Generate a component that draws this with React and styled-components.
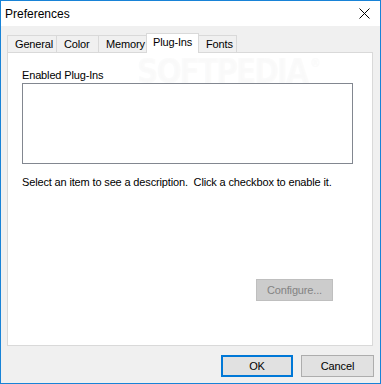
import React from "react";
import styled, { createGlobalStyle } from "styled-components";

const GlobalStyle = createGlobalStyle`
  html, body {
    margin: 0;
    padding: 0;
    background: #ffffff;
  }
  body {
    font-family: "Liberation Sans", Arial, sans-serif;
    font-size: 11px;
    letter-spacing: -0.15px;
    color: #000000;
  }
`;

const tabs = [
  { label: "General", width: 50 },
  { label: "Color", width: 43 },
  { label: "Memory", width: 49 },
  { label: "Plug-Ins", width: 53, active: true },
  { label: "Fonts", width: 39 },
];

const Window = styled.div`
  width: 381px;
  height: 384px;
  box-sizing: border-box;
  border: 1px solid #1883d7;
  background: #f0f0f0;
  display: flex;
  flex-direction: column;
  position: relative;
  overflow: hidden;
`;

const TitleBar = styled.div`
  height: 25px;
  background: #ffffff;
  display: flex;
  align-items: center;
  justify-content: space-between;
  padding: 0 0 0 4px;
  font-size: 12px;
  letter-spacing: 0;
`;

const CloseBox = styled.div`
  width: 46px;
  height: 25px;
  display: flex;
  align-items: center;
  justify-content: center;
  margin-right: -7px;
`;

const Body = styled.div`
  flex: 1;
  display: flex;
  flex-direction: column;
  padding: 7px 7px 0 6px;
`;

const TabRow = styled.div`
  display: flex;
  align-items: flex-end;
  height: 19px;
`;

const Tab = styled.div`
  box-sizing: border-box;
  width: ${(p) => p.$width}px;
  height: ${(p) => (p.$active ? 20 : 17)}px;
  border: 1px solid #d9d9d9;
  border-bottom: none;
  background: ${(p) => (p.$active ? "#ffffff" : "#f0f0f0")};
  margin-right: -1px;
  margin-bottom: ${(p) => (p.$active ? -1 : 0)}px;
  padding: ${(p) => (p.$active ? "1px 0 0 6px" : "1px 0 0 7px")};
  line-height: 15px;
  position: relative;
  z-index: ${(p) => (p.$active ? 1 : 0)};
  white-space: nowrap;
`;

const Pane = styled.div`
  box-sizing: border-box;
  height: 294px;
  border: 1px solid #d9d9d9;
  background: #ffffff;
  display: flex;
  flex-direction: column;
  padding: 14px 19px 0 14px;
`;

const Label = styled.div`
  line-height: 16px;
  height: 16px;
`;

const ListBox = styled.div`
  box-sizing: border-box;
  height: 81px;
  border: 1px solid #828790;
  background: #ffffff;
`;

const Hint = styled.div`
  line-height: 16px;
  margin-top: 10px;
  white-space: nowrap;
`;

const PaneFooter = styled.div`
  display: flex;
  justify-content: flex-end;
  margin-top: 89px;
  padding-right: 20px;
`;

const Button = styled.button`
  box-sizing: border-box;
  height: 22px;
  width: ${(p) => p.$width}px;
  font-family: inherit;
  font-size: 11px;
  letter-spacing: inherit;
  padding: 0;
  border: ${(p) => (p.$default ? "2px solid #0078d7" : "1px solid #adadad")};
  background: #e1e1e1;
  color: #000000;
  &:disabled {
    background: #cccccc;
    border-color: #bfbfbf;
    color: #838383;
  }
`;

const ButtonBar = styled.div`
  display: flex;
  justify-content: flex-end;
  gap: 8px;
  padding: 9px 0 0 0;
  margin-right: -1px;
`;

const Watermark = styled.div`
  position: absolute;
  left: 136px;
  top: 51px;
  font-family: "DejaVu Sans Condensed", "DejaVu Sans", sans-serif;
  font-weight: bold;
  font-size: 33px;
  letter-spacing: -2px;
  color: rgba(255, 255, 255, 0.45);
  text-shadow: 0 0 1px rgba(0, 0, 0, 0.035);
  pointer-events: none;
  z-index: 2;
  sup {
    font-size: 12px;
    vertical-align: 16px;
    margin-left: 3px;
  }
`;

function CloseIcon() {
  return (
    <svg width="11" height="11" viewBox="0 0 11 11">
      <path d="M0.5 0.5 L10.5 10.5 M10.5 0.5 L0.5 10.5" stroke="#000" strokeWidth="1" fill="none" />
    </svg>
  );
}

export default function App() {
  return (
    <>
      <GlobalStyle />
      <Window>
        <TitleBar>
          <span>Preferences</span>
          <CloseBox>
            <CloseIcon />
          </CloseBox>
        </TitleBar>
        <Body>
          <TabRow>
            {tabs.map((t) => (
              <Tab key={t.label} $width={t.width} $active={t.active}>
                {t.label}
              </Tab>
            ))}
          </TabRow>
          <Pane>
            <Label>Enabled Plug-Ins</Label>
            <ListBox />
            <Hint>Select an item to see a description.&nbsp; Click a checkbox to enable it.</Hint>
            <PaneFooter>
              <Button $width={77} disabled>
                Configure...
              </Button>
            </PaneFooter>
          </Pane>
          <ButtonBar>
            <Button $width={72} $default>
              OK
            </Button>
            <Button $width={73}>Cancel</Button>
          </ButtonBar>
        </Body>
        <Watermark>
          SOFTPEDIA<sup>®</sup>
        </Watermark>
      </Window>
    </>
  );
}
